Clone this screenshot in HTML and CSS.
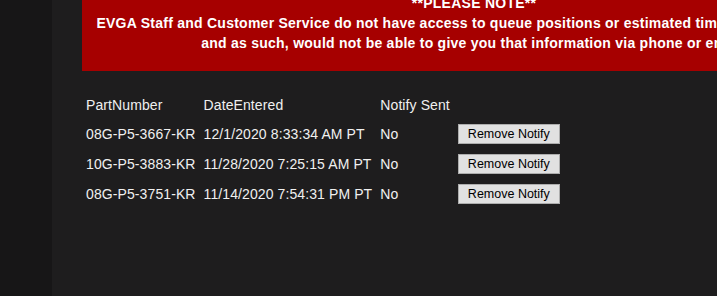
FILE: index.html
```html
<!DOCTYPE html>
<html lang="en">
<head>
<meta charset="UTF-8">
<title>Notify List</title>
<link rel="stylesheet" href="styles.css">
</head>
<body>
<div class="page">
  <!-- left rail -->
  <div class="side"></div>

  <div class="content">
    <div class="notice">
      **PLEASE NOTE**<br>
      EVGA Staff and Customer Service do not have access to queue positions or estimated times for notifications,<br>
      and as such, would not be able to give you that information via phone or email.
    </div>

    <table class="notify-table">
      <tr class="head">
        <td>PartNumber</td>
        <td>DateEntered</td>
        <td>Notify Sent</td>
        <td></td>
      </tr>
      <tr>
        <td>08G-P5-3667-KR</td>
        <td>12/1/2020 8:33:34 AM PT</td>
        <td>No</td>
        <td><button class="remove-btn">Remove Notify</button></td>
      </tr>
      <tr>
        <td>10G-P5-3883-KR</td>
        <td>11/28/2020 7:25:15 AM PT</td>
        <td>No</td>
        <td><button class="remove-btn">Remove Notify</button></td>
      </tr>
      <tr>
        <td>08G-P5-3751-KR</td>
        <td>11/14/2020 7:54:31 PM PT</td>
        <td>No</td>
        <td><button class="remove-btn">Remove Notify</button></td>
      </tr>
    </table>
  </div>
</div>
</body>
</html>
```

FILE: styles.css
```css
html, body {
margin: 0;
padding: 0;
height: 100%;
}

body {
background: #1e1d1e;
font-family: "Liberation Sans", Arial, sans-serif;
color: #f0f0f0;
overflow: hidden;
}

.page {
display: flex;
min-height: 100%;
}

.side {
width: 52px;
flex-shrink: 0;
background: #171617;
}

.content {
flex: 1;
padding-left: 30px;
}

/* red warning box, page is scrolled a bit so it starts above the fold */
.notice {
width: 784px;
box-sizing: border-box;
margin-top: -22px;
padding: 15px 10px 18px;
background: #a60000;
color: #ffffff;
font-weight: bold;
font-size: 14px;
letter-spacing: 0.25px;
line-height: 20px;
text-align: center;
white-space: nowrap;
}

.notify-table {
margin-top: 20px;
border-collapse: collapse;
font-size: 14px;
letter-spacing: 0.1px;
}

.notify-table td {
padding: 0 4px;
height: 30px;
vertical-align: middle;
white-space: nowrap;
}

.notify-table .head td {
height: 28px;
}

.remove-btn {
height: 20px;
padding: 0 9px;
margin: 0;
background: #e1e1e1;
border: 1px solid #adadad;
border-radius: 0;
color: #000000;
font-family: "Liberation Sans", Arial, sans-serif;
font-size: 12.5px;
letter-spacing: 0;
line-height: 18px;
}
```
